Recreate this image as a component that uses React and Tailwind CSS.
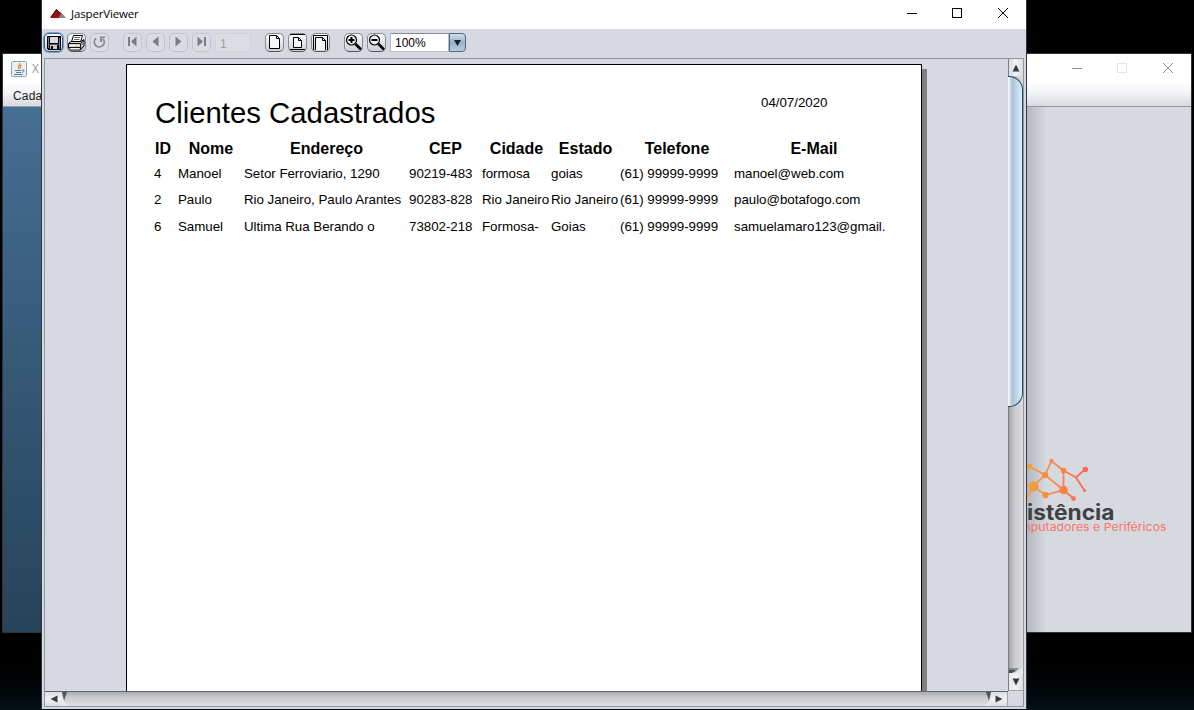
const columns = ["ID", "Nome", "Endereço", "CEP", "Cidade", "Estado", "Telefone", "E-Mail"];
const clients = [
  ["4", "Manoel", "Setor Ferroviario, 1290", "90219-483", "formosa", "goias", "(61) 99999-9999", "manoel@web.com"],
  ["2", "Paulo", "Rio Janeiro, Paulo Arantes", "90283-828", "Rio Janeiro", "Rio Janeiro", "(61) 99999-9999", "paulo@botafogo.com"],
  ["6", "Samuel", "Ultima Rua Berando o", "73802-218", "Formosa-", "Goias", "(61) 99999-9999", "samuelamaro123@gmail."],
];
const gridCols = "grid grid-cols-[24px_66px_165px_73px_69px_69px_114px_160px]";

function ToolButton({ children, disabled, focused, label }) {
  const look = disabled
    ? "border-[#bfc3cc] bg-[#d9dce3]"
    : focused
      ? "border-[#3c5f86] bg-linear-to-b from-white to-[#cdd1d8] ring-1 ring-[#73a4d1]"
      : "border-[#858a94] border-b-[#50555f] bg-linear-to-b from-[#fafbfc] to-[#ccd0d8]";
  return (
    <button aria-label={label} className={`flex h-[19px] w-[19px] items-center justify-center rounded-[5px] border ${look}`}>
      {children}
    </button>
  );
}

function SaveIcon() {
  return (
    <svg className="h-[14px] w-[14px] shrink-0" viewBox="0 0 14 14" shapeRendering="crispEdges">
      <path d="M0 0H14V14H1L0 13Z" fill="#000" />
      <path d="M1 1H2V12H1ZM12 2H13V13H12Z" fill="#7c7c80" />
      <path d="M3 1H11V7H3Z" fill="#d8dbe1" />
      <path d="M3 9H10V13H3Z" fill="#c9ccd2" />
      <path d="M4 10H6V13H4Z" fill="#000" />
      <path d="M2 8H12V9H2Z" fill="#55555a" />
    </svg>
  );
}

function PrintIcon() {
  return (
    <svg className="h-[16px] w-[17px] shrink-0" viewBox="0 0 17 16">
      <path d="M5.5 .5H14.5L12.5 7H3.5Z" fill="#fff" stroke="#000" />
      <path d="M6.5 2.5H12M6 4.5H11.5" stroke="#444" strokeWidth=".8" />
      <path d="M.5 8.5L3 6.5H13L16 4.5V11L12.5 15H2.5L.5 13Z" fill="#d0d2d5" stroke="#000" />
      <path d="M1 8.5H12.5L16 5.5M12.5 8.5V14.5M1 12.5H12" fill="none" stroke="#000" strokeWidth=".9" />
      <path d="M2 10.500H11M3 13.800H11" stroke="#fff" />
      <path d="M7 11H10" stroke="#d9c62c" />
      <path d="M13.5 10L15.5 8M13.5 13L15.5 11" stroke="#333" strokeWidth=".8" />
    </svg>
  );
}

function ReloadIcon() {
  return (
    <svg className="h-[13px] w-[13px] shrink-0" viewBox="0 0 13 13">
      <path d="M3 2.4A4.9 4.9 0 1 0 10 2.8" fill="none" stroke="#85878b" strokeWidth="1.8" />
      <path d="M7 .5H12V2H9L9 6H7Z" fill="#85878b" />
    </svg>
  );
}

function NavIcon({ left, bar }) {
  return (
    <svg className="mb-[2px] h-[11px] w-[11px] shrink-0" viewBox="0 0 11 11">
      <g fill="#7b7d82" transform={left ? undefined : "matrix(-1 0 0 1 11 0)"}>
        {bar && <path d="M1 1H3V10H1Z" />}
        {bar ? <path d="M9.500 .5V10.500L4 5.5Z" /> : <path d="M8.500 .5V10.5L2.5 5.5Z" />}
      </g>
    </svg>
  );
}

function SheetIcon({ kind }) {
  return (
    <svg className="h-[17px] w-[17px] shrink-0" viewBox="0 0 17 17" fill="none" stroke="#000">
      {kind === "actual" && (
        <>
          <path d="M3.5 1.5H10.5L13.5 4.5V14.5H3.5Z" fill="#f5f6f8" />
          <path d="M10.5 1.5V4.5H13.5" />
        </>
      )}
      {kind === "fit" && (
        <>
          <path d="M1 .5H16M1 15.5H16" />
          <path d="M4.5 3.5H9.5L12.5 6.5V13.5H4.5Z" fill="#f5f6f8" />
          <path d="M9.5 3.5V6.5H12.5" />
        </>
      )}
      {kind === "width" && (
        <>
          <path d="M1.5 16V1.5H15.5V16" />
          <path d="M3.5 16V3.5H10.5L13.5 6.5V16" fill="#f5f6f8" />
          <path d="M10.5 3.5V6.5H13.5" />
        </>
      )}
    </svg>
  );
}

function ZoomIcon({ plus }) {
  return (
    <svg className="h-[17px] w-[17px] shrink-0" viewBox="0 0 17 17" fill="none" stroke="#000">
      <circle cx="6.5" cy="6" r="5" fill="#eef0f3" strokeWidth="1.2" />
      <path d="M3.5 6H9.5" strokeWidth="2" />
      {plus && <path d="M6.5 3V9" strokeWidth="2" />}
      <path d="M10.5 10L16 15.5" strokeWidth="2.6" />
    </svg>
  );
}

function WindowButtons({ dim }) {
  return (
    <svg className="h-[12px] w-[103px]" viewBox="0 0 103 12" fill="none" stroke={dim ? "#8d8d8d" : "#000"}>
      <path d="M0 6.5H10" />
      <rect x="45.500" y="1.500" width="9" height="9" stroke={dim ? "#e4e4e4" : "#000"} />
      <path d="M91 1L101 11M101 1L91 11" />
    </svg>
  );
}

function Arrow({ d }) {
  return (
    <svg className="h-[8px] w-[8px]" viewBox="0 0 8 8">
      <path d={d} fill="#3b3b3d" />
    </svg>
  );
}

function BackWindow() {
  return (
    <div className="absolute left-[2px] top-[53px] flex h-[580px] w-[1190px] flex-col border border-[#30343a] bg-[#d6d9e0]">
      <div className="flex h-[30px] shrink-0 items-center justify-between bg-white pl-[8px] pr-[16px]">
        <div className="flex items-center gap-[5px]">
          <svg className="h-4 w-4" viewBox="0 0 16 16" fill="none">
            <rect x=".5" y=".5" width="15" height="15" rx="1" fill="#e9eff3" stroke="#8ca6b8" />
            <path d="M8.500 2C10 4 5.500 5 8 8M10.500 4C8.500 5 9 6 9.500 7.500" stroke="#e3812f" strokeWidth="1.200" />
            <path d="M4 9.500H10.500M5 11.500H10M3 13.500H11.500M11 9C14 8.500 13.500 11 11 11.500" stroke="#527a9b" />
          </svg>
          <span className="font-['Open_Sans',sans-serif] text-[12px] text-[#999]">X</span>
        </div>
        <div className="mb-[3px]"><WindowButtons dim /></div>
      </div>
      <div className="flex h-[23px] shrink-0 items-center border-b border-[#9297a1] bg-linear-to-b from-[#fafafb] from-10% via-[#f3f4f6] via-40% to-[#d6d9e0] pl-[10px] pt-[2px] text-[12px] tracking-[0.2px] text-[#222]">
        Cada
      </div>
      <div className="flex min-h-0 grow">
        <div className="w-[39px] bg-linear-to-b from-[#466f94] to-[#264359]" />
        <div className="grow" />
        <div className="flex w-[165px] items-start bg-linear-to-r from-[#b3b6bc] to-[#d6d9e0] to-[20px] pt-[347px]">
          <svg className="h-[86px] w-[150px]" viewBox="1026 454 150 86">
            <defs>
              <linearGradient id="network" gradientUnits="userSpaceOnUse" x1="1026" y1="0" x2="1088" y2="0">
                <stop offset="0" stopColor="#f0a13c" />
                <stop offset=".5" stopColor="#fb8748" />
                <stop offset="1" stopColor="#ff6250" />
              </linearGradient>
            </defs>
            <g stroke="url(#network)" strokeWidth="1.700" fill="none">
              <path d="M1029.500 466.500L1045 475L1051.500 461L1063.500 470.500V490L1045 475L1033.500 486.500L1045.500 495L1063.500 490L1073.500 498.500M1063.500 470.500L1076 477.500L1085 469.500M1076 477.500L1084.500 490.500M1026 484L1033.500 486.500L1026 499" />
            </g>
            <g fill="url(#network)">
              <circle cx="1029.500" cy="466.500" r="2.800" /><circle cx="1045" cy="475" r="3.200" />
              <circle cx="1051.500" cy="461" r="2.200" /><circle cx="1063.500" cy="470.500" r="2.700" />
              <circle cx="1063.500" cy="490" r="4.300" /><circle cx="1085.300" cy="469.500" r="2.700" />
              <circle cx="1084.500" cy="490.500" r="1.500" /><circle cx="1073.500" cy="498.500" r="2.400" />
              <circle cx="1045.500" cy="495" r="3.200" /><circle cx="1033.500" cy="486.500" r="4.900" />
            </g>
            <text x="1027" y="520" textLength="87.500" lengthAdjust="spacingAndGlyphs" fontSize="20.500" fontWeight="700" fill="#404143" className="font-['Inter',sans-serif]">istência</text>
            <text x="1020" y="530.500" textLength="146.500" lengthAdjust="spacingAndGlyphs" fontSize="11" fill="#fa7468" className="font-['Inter',sans-serif]">mputadores e Periféricos</text>
          </svg>
        </div>
      </div>
    </div>
  );
}

function ReportPage() {
  return (
    <div className="ml-[81px] mt-[5px] flex h-[627px] w-[801px]">
      <div className="flex w-[796px] flex-col border border-b-0 border-black bg-white pl-[27px] text-black">
        <div className="flex h-[68px] items-start">
          <h1 className="w-[607px] pl-px pt-[31px] text-[29.33px] leading-[34px]">Clientes Cadastrados</h1>
          <span className="pt-[30px] text-[13.33px] leading-[16px] tracking-[-0.02px]">04/07/2020</span>
        </div>
        <div className={`${gridCols} h-[32px] items-center text-[16px] font-bold leading-[20px]`}>
          {columns.map((c, i) => (
            <span key={c} className={i === 0 ? "pl-px" : "text-center"}>{c}</span>
          ))}
        </div>
        {clients.map((row) => (
          <div key={row[0]} className={`${gridCols} h-[26px] text-[13.33px] leading-[18px] tracking-[-0.03px] last:mt-[1px]`}>
            {row.map((cell, i) => (
              <span key={i} className="whitespace-nowrap">{cell}</span>
            ))}
          </div>
        ))}
      </div>
      <div className="mt-[5px] w-[5px] bg-[#808080]" />
    </div>
  );
}

function ViewerWindow() {
  return (
    <div className="absolute left-[41px] top-0 flex h-[709px] w-[986px] flex-col border-x border-[#33373d] bg-[#d6d9e1]">
      <div className="flex h-[29px] shrink-0 items-center justify-between bg-white pl-[8px] pr-[16px]">
        <div className="flex items-center gap-[5px] pb-[2px]">
          <svg className="h-[9px] w-4" viewBox="0 0 16 9">
            <path d="M5 9L10.500 2.500L16 9Z" fill="#858585" />
            <path d="M0 9L6.500 0L11 5L8.500 9Z" fill="#9c1016" />
            <path d="M1 8L6.500 .5L10 4" fill="none" stroke="#2b1214" />
          </svg>
          <span className="font-['Open_Sans',sans-serif] text-[11.500px] tracking-[-0.15px] text-black">JasperViewer</span>
        </div>
        <div className="mb-[3px]"><WindowButtons /></div>
      </div>
      <div className="flex h-[29px] shrink-0 items-center gap-[14px] pb-[2px] pl-[2px]">
        <div className="flex gap-1">
          <ToolButton label="Salvar" focused><SaveIcon /></ToolButton>
          <ToolButton label="Imprimir"><PrintIcon /></ToolButton>
          <ToolButton label="Recarregar" disabled><ReloadIcon /></ToolButton>
        </div>
        <div className="flex gap-1">
          <ToolButton label="Primeira" disabled><NavIcon left bar /></ToolButton>
          <ToolButton label="Anterior" disabled><NavIcon left /></ToolButton>
          <ToolButton label="Próxima" disabled><NavIcon /></ToolButton>
          <ToolButton label="Última" disabled><NavIcon bar /></ToolButton>
          <div className="flex h-[19px] w-9 items-center border border-[#d0d3da] bg-[#dadde3] pl-[4px] pt-[2px] text-[12px] text-[#9b9ea4]">1</div>
        </div>
        <div className="flex gap-1">
          <ToolButton label="Tamanho real"><SheetIcon kind="actual" /></ToolButton>
          <ToolButton label="Ajustar página"><SheetIcon kind="fit" /></ToolButton>
          <ToolButton label="Ajustar largura"><SheetIcon kind="width" /></ToolButton>
        </div>
        <div className="flex gap-1">
          <ToolButton label="Ampliar"><ZoomIcon plus /></ToolButton>
          <ToolButton label="Reduzir"><ZoomIcon /></ToolButton>
          <div className="flex h-[19px] w-[76px]">
            <div className="flex w-[59px] items-center border border-[#b8bcc5] border-t-[#858a94] bg-white pl-[4px] text-[12px] text-black">100%</div>
            <div className="flex w-[17px] items-center justify-center rounded-r-[4px] border border-[#50687f] bg-linear-to-b from-[#d4e0eb] via-[#96b0c7] to-[#b8d0e2]">
              <svg className="h-[6px] w-[7px]" viewBox="0 0 7 6"><path d="M0 0H7L3.500 6Z" fill="#1c1f23" /></svg>
            </div>
          </div>
        </div>
      </div>
      <div className="ml-[2px] flex h-[649px] w-[980px] shrink-0 flex-col border border-[#9296a0]">
        <div className="flex h-[632px] shrink-0">
          <div className="h-[632px] w-[963px] overflow-hidden bg-[#d6d9e1]"><ReportPage /></div>
          <div className="flex w-[15px] flex-col border-l border-[#7d7e84] bg-linear-to-r from-[#a5a6ab] via-[#cbccd1] via-40% to-[#dcdce0]">
            <div className="flex h-[17px] items-center justify-center bg-linear-to-r from-[#d9dce1] via-[#f1f2f4] to-[#dadde2]"><Arrow d="M4 .5L7.500 7.500H.5Z" /></div>
            <div className="-ml-px h-[331px] rounded-r-[14px] border border-l-0 border-[#2b4459] border-r-[#2b4459] bg-linear-to-r from-white via-[#a9c2d6] via-30% to-[#d9f1fb]" />
            <div className="grow" />
            <svg className="h-[8px] w-[14px] shrink-0" viewBox="0 0 14 8">
              <path d="M0 2H10L5 7H0Z" fill="#555" opacity=".5" />
              <path d="M0 4H7L3 7H0Z" fill="#333" opacity=".7" />
              <path d="M0 7C7 7 12 4 14 0V8H0Z" fill="#e6e9eb" />
            </svg>
            <div className="flex h-[17px] items-center justify-center border-b border-[#a0a3aa] bg-linear-to-r from-[#e7e9ec] via-[#f1f2f4] to-[#dadde2]"><Arrow d="M4 7.500L7.500 .5H.5Z" /></div>
          </div>
        </div>
        <div className="flex h-[15px]">
          <div className="flex w-[963px] border-t border-[#62646a] bg-linear-to-b from-[#a9aab0] via-[#cbccd1] via-40% to-[#dedee2]">
            <div className="flex w-[17px] items-center justify-center bg-linear-to-b from-[#d9dce1] via-[#f1f2f4] to-[#dadde2]"><Arrow d="M.5 4L7.500 .5V7.500Z" /></div>
            <svg className="h-[14px] w-[8px]" viewBox="0 0 8 14">
              <path d="M0 0H5L2 9Z" fill="#222" opacity=".65" />
              <path d="M0 0C0 7 3 12 8 14H0Z" fill="#e6e9eb" />
            </svg>
            <div className="grow" />
            <svg className="h-[14px] w-[8px]" viewBox="0 0 8 14">
              <path d="M8 0H3L6 9Z" fill="#222" opacity=".65" />
              <path d="M8 0C8 7 5 12 0 14H8Z" fill="#e6e9eb" />
            </svg>
            <div className="flex w-[17px] items-center justify-center border-r border-[#a0a3aa] bg-linear-to-b from-[#d9dce1] via-[#f1f2f4] to-[#dadde2]"><Arrow d="M7.500 4L.5 .5V7.500Z" /></div>
          </div>
        </div>
      </div>
    </div>
  );
}

export default function App() {
  return (
    <main className="relative h-[710px] w-[1194px] overflow-hidden bg-black bg-linear-to-t from-[#041014] to-black to-[80px] font-['Liberation_Sans',Arial,sans-serif]">
      <BackWindow />
      <ViewerWindow />
    </main>
  );
}
